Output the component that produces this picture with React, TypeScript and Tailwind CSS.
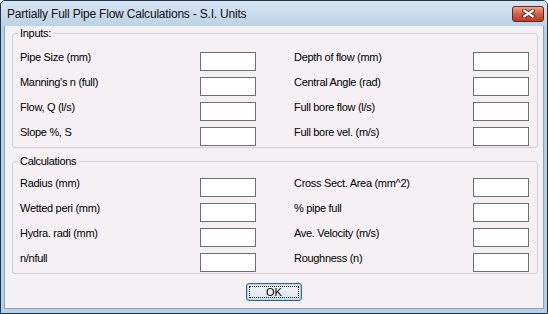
import React from "react";

const inputs: [string, string][] = [
    ["Pipe Size (mm)", "Depth of flow (mm)"],
    ["Manning's n (full)", "Central Angle (rad)"],
    ["Flow, Q (l/s)", "Full bore flow (l/s)"],
    ["Slope %, S", "Full bore vel. (m/s)"],
];

const calcs: [string, string][] = [
    ["Radius (mm)", "Cross Sect. Area (mm^2)"],
    ["Wetted peri (mm)", "% pipe full"],
    ["Hydra. radi (mm)", "Ave. Velocity (m/s)"],
    ["n/nfull", "Roughness (n)"],
];

function Field({ label }: { label: string }) {
    return (
        <div className="flex h-[19px] items-start justify-between">
            <span className="-mt-px leading-[13px] tracking-[-0.3px]">{label}</span>
            <input
                type="text"
                readOnly
                className="h-[19px] w-[56px] border border-[#6f6f6f] bg-white outline-none"
            />
        </div>
    );
}

function Group({
    title,
    rows,
    className,
}: {
    title: string;
    rows: [string, string][];
    className: string;
}) {
    return (
        <fieldset
            className={`ml-[7px] mr-[5px] rounded-[3px] border border-[#d3ced3] pb-px pl-[7px] pr-[8px] ${className}`}
        >
            <legend className="-ml-[2px] px-[2px] leading-[13px] tracking-[-0.3px]">{title}</legend>
            <div className="flex gap-[38px]">
                <div className="flex w-[236px] flex-col gap-[6px]">
                    {rows.map((r) => (
                        <Field key={r[0]} label={r[0]} />
                    ))}
                </div>
                <div className="flex w-[235px] flex-col gap-[6px]">
                    {rows.map((r) => (
                        <Field key={r[1]} label={r[1]} />
                    ))}
                </div>
            </div>
        </fieldset>
    );
}

export default function App() {
    return (
        <div className="flex h-[314px] w-[548px] flex-col rounded-t-[5px] border border-[#1f3349] bg-[#b7cfe6] font-['Liberation_Sans',Arial,sans-serif] text-[11px] text-black">
            {/* title bar */}
            <div className="flex h-[25px] items-center justify-between rounded-t-[4px] bg-gradient-to-b from-[#d8e5f2] to-[#bcd2e8] pl-[6px] pr-[3px]">
                <span className="text-[12px] tracking-[-0.2px] text-[#111]">
                    Partially Full Pipe Flow Calculations - S.I. Units
                </span>
                <div className="flex h-[16px] w-[32px] items-center justify-center rounded-[3px] border border-[#6a2317] bg-gradient-to-b from-[#e9a898] via-[#d15c44] to-[#c03b25]">
                    <svg width="13" height="9" viewBox="0 0 13 9">
                        <path d="M2 1.5 L11 7.5 M11 1.5 L2 7.5" stroke="#5a2218" strokeWidth="4" strokeLinecap="round" />
                        <path d="M2 1.5 L11 7.5 M11 1.5 L2 7.5" stroke="#ffffff" strokeWidth="2.2" strokeLinecap="round" />
                    </svg>
                </div>
            </div>

            {/* client area */}
            <div className="mx-[3px] mb-[4px] flex flex-1 flex-col border-x border-b border-[#8da5bd] bg-[#f4f0f4]">
                <Group title="Inputs:" rows={inputs} className="mt-px pt-[12px]" />
                <Group title="Calculations" rows={calcs} className="mt-[7px] pt-[10px]" />
                <div className="mt-[9px] flex justify-center">
                    <button className="h-[18px] w-[56px] rounded-[3px] border border-[#2e6a96] bg-gradient-to-b from-[#f3f6f8] to-[#dde6ec] p-[2px] shadow-[inset_0_0_0_1px_#9fd6f2]">
                        <span className="flex h-full w-full items-center justify-center border border-dotted border-black leading-none">
                            OK
                        </span>
                    </button>
                </div>
            </div>
        </div>
    );
}
